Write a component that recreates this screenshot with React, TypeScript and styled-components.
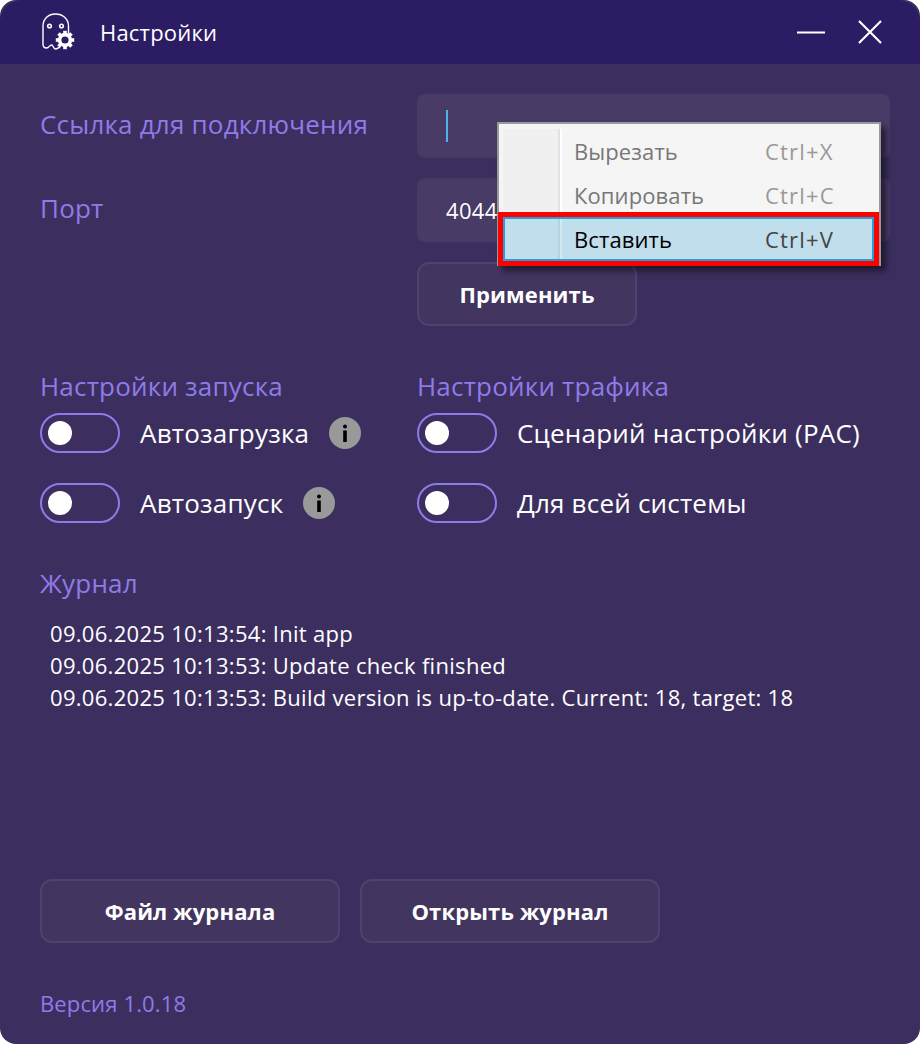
import React from 'react'
import styled, { createGlobalStyle } from 'styled-components'

const Global = createGlobalStyle`
  html, body {
    margin: 0;
    background: #fff;
  }
  * {
    box-sizing: border-box;
  }
`

const colors = {
  title: '#2b1c63',
  body: '#3c2f5f',
  field: '#483b66',
  button: '#42355f',
  buttonBorder: '#4e4270',
  accent: '#8f7be8',
}

const Window = styled.div`
  position: relative;
  display: flex;
  flex-direction: column;
  width: 920px;
  height: 1044px;
  overflow: hidden;
  border-radius: 16px;
  background: ${colors.body};
  color: #fff;
  font-family: 'Open Sans', 'Noto Sans', sans-serif;
`

const TitleBar = styled.header`
  display: flex;
  align-items: center;
  flex-shrink: 0;
  height: 64px;
  padding: 0 37px 0 41px;
  border-radius: 22px 22px 0 0;
  background: ${colors.title};
`

const AppTitle = styled.h1`
  flex: 1;
  margin: 0 0 0 25px;
  font-size: 22px;
  font-weight: 400;
  letter-spacing: 0.2px;
`

const WindowButtons = styled.div`
  display: flex;
  align-items: center;
  gap: 32px;
`

const Content = styled.main`
  display: flex;
  flex: 1;
  flex-direction: column;
  padding: 30px 30px 0 40px;
`

const Settings = styled.section`
  display: grid;
  grid-template-columns: 377px 473px;
  row-gap: 20px;
`

const Label = styled.label`
  align-self: start;
  margin-top: 12px;
  color: ${colors.accent};
  font-size: 26px;
  line-height: 36px;
  letter-spacing: 0.2px;
`

const Field = styled.div`
  display: flex;
  align-items: center;
  height: 64px;
  padding-left: 29px;
  border-radius: 8px;
  background: ${colors.field};
  font-size: 22px;
  letter-spacing: 0.3px;
`

const Caret = styled.span`
  width: 2px;
  height: 32px;
  background: #4fb4ea;
`

const ActionButton = styled.button<{ $width: number }>`
  width: ${p => p.$width}px;
  height: 64px;
  border: 2px solid ${colors.buttonBorder};
  border-radius: 12px;
  background: ${colors.button};
  color: #fff;
  font-family: inherit;
  font-size: 22px;
  font-weight: 700;
  letter-spacing: 0.15px;
`

const Columns = styled.div`
  display: grid;
  grid-template-columns: 377px 473px;
  margin-top: 42px;
`

const SectionTitle = styled.h2`
  margin: 0;
  color: ${colors.accent};
  font-size: 26px;
  font-weight: 400;
  line-height: 36px;
  letter-spacing: 0.2px;
`

const ToggleList = styled.div`
  display: flex;
  flex-direction: column;
  gap: 30px;
  margin-top: 9px;
`

const ToggleRow = styled.div`
  display: flex;
  align-items: center;
  gap: 20px;
  height: 40px;
  font-size: 26px;
  letter-spacing: 0.2px;
`

const Toggle = styled.span`
  display: flex;
  align-items: center;
  flex-shrink: 0;
  width: 80px;
  height: 40px;
  padding-left: 6px;
  border: 2px solid ${colors.accent};
  border-radius: 20px;

  &::before {
    content: '';
    width: 24px;
    height: 24px;
    border-radius: 50%;
    background: #fff;
  }
`

const LogSection = styled.section`
  margin-top: 42px;
`

const LogList = styled.div`
  margin-top: 16px;
  padding-left: 10px;
  font-size: 22px;
  line-height: 32px;
  letter-spacing: 0.3px;
`

const LogButtons = styled.div`
  display: flex;
  gap: 20px;
  margin-top: 166px;
`

const Version = styled.footer`
  margin-top: 44px;
  color: ${colors.accent};
  font-size: 22px;
  line-height: 32px;
  letter-spacing: 0.14px;
`

const ContextMenu = styled.div`
  position: absolute;
  top: 122px;
  left: 497px;
  width: 384px;
  height: 144px;
  padding: 5px 5px 0 4px;
  border: 2px solid #999;
  background: #f5f5f5;
  box-shadow: 5px 5px 6px rgba(0, 0, 0, 0.5);
  font-size: 22px;
`

const MenuItem = styled.div<{ $active?: boolean }>`
  position: relative;
  display: grid;
  grid-template-columns: ${p => (p.$active ? '55px' : '57px')} 205px 1fr;
  align-items: center;
  height: 44px;
  border: ${p => (p.$active ? '2px solid #26a0da' : '0')};
  background: ${p => (p.$active ? '#c0deec' : 'transparent')};
  box-shadow: ${p => (p.$active ? '0 0 0 5px #f00' : 'none')};
  color: ${p => (p.$active ? '#000' : '#777')};
  letter-spacing: 0.1px;
`

const MenuGutter = styled.span<{ $active?: boolean }>`
  align-self: stretch;
  border-right: 2px solid ${p => (p.$active ? '#b5d2df' : '#e2e2e2')};
  background: ${p => (p.$active ? 'transparent' : '#f0f0f0')};
  box-shadow: 2px 0 0 ${p => (p.$active ? '#d2e8f2' : '#fff')};
`

const MenuLabel = styled.span`
  padding-left: 14px;
`

const Shortcut = styled.span<{ $active?: boolean }>`
  color: ${p => (p.$active ? '#444' : '#999')};
  letter-spacing: 1.2px;
`

const GhostIcon = () => (
  <svg width="34" height="38" viewBox="0 0 34 38" fill="none">
    <path
      d="M2 31V13C2 5.5 7.5 1 14.5 1S27.5 5.5 27.5 13V20M2 31C2 34 3.5 35 5.5 35C8 35 8.5 32 10.5 32C12.5 32 12 36 14.5 36C16.5 36 17 34.5 18.5 34.5"
      stroke="#fff"
      strokeWidth="1.4"
      strokeLinecap="round"
    />
    <circle cx="8.5" cy="13" r="2.6" fill="#fff" />
    <circle cx="8.5" cy="13" r="1" fill={colors.title} />
    <circle cx="20.5" cy="13" r="2.6" fill="#fff" />
    <circle cx="20.5" cy="13" r="1" fill={colors.title} />
    <circle cx="24" cy="27" r="5.4" stroke="#fff" strokeWidth="3.6" />
    {[0, 45, 90, 135, 180, 225, 270, 315].map(angle => (
      <rect
        key={angle}
        x="22.2"
        y="17.8"
        width="3.6"
        height="4"
        fill="#fff"
        transform={`rotate(${angle} 24 27)`}
      />
    ))}
  </svg>
)

const MinimizeIcon = () => (
  <svg width="28" height="3" viewBox="0 0 28 3">
    <rect width="28" height="2" y="0.5" fill="#fff" />
  </svg>
)

const CloseIcon = () => (
  <svg width="26" height="26" viewBox="0 0 26 26">
    <path d="M2 2L24 24M24 2L2 24" stroke="#fff" strokeWidth="2.2" />
  </svg>
)

const InfoIcon = () => (
  <svg width="32" height="32" viewBox="0 0 32 32">
    <circle cx="16" cy="16" r="16" fill="#999" />
    <circle cx="16" cy="9.5" r="2" fill="#000" />
    <rect x="14.2" y="13.5" width="3.6" height="11.5" fill="#000" />
  </svg>
)

export default function App() {
  return (
    <Window>
      <Global />
      <TitleBar>
        <GhostIcon />
        <AppTitle>Настройки</AppTitle>
        <WindowButtons>
          <MinimizeIcon />
          <CloseIcon />
        </WindowButtons>
      </TitleBar>

      <Content>
        <Settings>
          <Label>Ссылка для подключения</Label>
          <Field>
            <Caret />
          </Field>
          <Label>Порт</Label>
          <Field>4044</Field>
          <span />
          <ActionButton $width={220}>Применить</ActionButton>
        </Settings>

        <Columns>
          <div>
            <SectionTitle>Настройки запуска</SectionTitle>
            <ToggleList>
              <ToggleRow>
                <Toggle />
                Автозагрузка
                <InfoIcon />
              </ToggleRow>
              <ToggleRow>
                <Toggle />
                Автозапуск
                <InfoIcon />
              </ToggleRow>
            </ToggleList>
          </div>
          <div>
            <SectionTitle>Настройки трафика</SectionTitle>
            <ToggleList>
              <ToggleRow>
                <Toggle />
                Сценарий настройки (PAC)
              </ToggleRow>
              <ToggleRow>
                <Toggle />
                Для всей системы
              </ToggleRow>
            </ToggleList>
          </div>
        </Columns>

        <LogSection>
          <SectionTitle>Журнал</SectionTitle>
          <LogList>
            <div>09.06.2025 10:13:54: Init app</div>
            <div>09.06.2025 10:13:53: Update check finished</div>
            <div>09.06.2025 10:13:53: Build version is up-to-date. Current: 18, target: 18</div>
          </LogList>
        </LogSection>

        <LogButtons>
          <ActionButton $width={300}>Файл журнала</ActionButton>
          <ActionButton $width={300}>Открыть журнал</ActionButton>
        </LogButtons>

        <Version>Версия 1.0.18</Version>
      </Content>

      <ContextMenu>
        <MenuItem>
          <MenuGutter />
          <MenuLabel>Вырезать</MenuLabel>
          <Shortcut>Ctrl+X</Shortcut>
        </MenuItem>
        <MenuItem>
          <MenuGutter />
          <MenuLabel>Копировать</MenuLabel>
          <Shortcut>Ctrl+C</Shortcut>
        </MenuItem>
        <MenuItem $active>
          <MenuGutter $active />
          <MenuLabel>Вставить</MenuLabel>
          <Shortcut $active>Ctrl+V</Shortcut>
        </MenuItem>
      </ContextMenu>
    </Window>
  )
}
